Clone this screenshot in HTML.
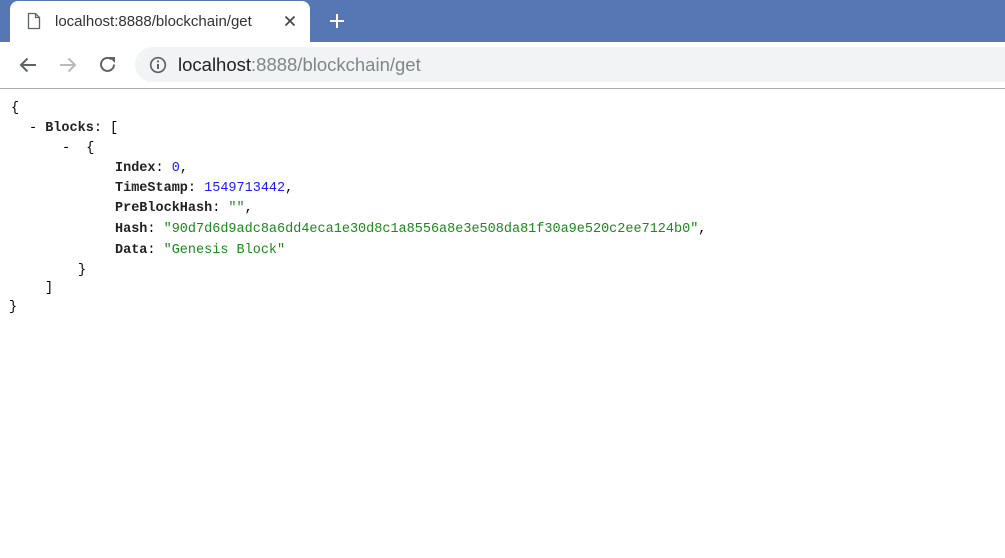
<!DOCTYPE html>
<html><head><meta charset="utf-8"><style>
body{margin:0;width:1005px;height:558px;position:relative;background:#fff;overflow:hidden;font-family:"Liberation Sans",sans-serif}
.a{position:absolute}
.j{position:absolute;font-family:"Liberation Mono","DejaVu Sans Mono",monospace;font-size:13.5px;line-height:16px;color:#000;white-space:pre}
.k{font-weight:bold;color:#222}
.n{color:#1a1aff}
.s{color:#1a8a1a}
</style></head><body>
<div class="a" style="left:0;top:0;width:1005px;height:42px;background:#5677b4"></div>
<div class="a" style="left:10px;top:1px;width:300px;height:41px;background:#fff;border-radius:8px 8px 0 0"></div>
<svg class="a" style="left:26px;top:12px" width="16" height="18" viewBox="0 0 16 18"><path d="M2.5 1.5h7l4 4v11h-11z M9.5 1.5v4h4" fill="none" stroke="#5f6368" stroke-width="1.3"/></svg>
<div class="a" style="left:55px;top:13px;font-size:15px;color:#333">localhost:8888/blockchain/get</div>
<svg class="a" style="left:284px;top:15px" width="12" height="12"><path d="M1.5 1.5l9 9M10.5 1.5l-9 9" stroke="#444" stroke-width="1.7"/></svg>
<svg class="a" style="left:329px;top:13px" width="16" height="16"><path d="M8 1v14M1 8h14" stroke="#fff" stroke-width="2"/></svg>
<svg class="a" style="left:18px;top:56px" width="20" height="18"><path d="M18 9H3M9.5 2.5L3 9l6.5 6.5" fill="none" stroke="#5f6368" stroke-width="2"/></svg>
<svg class="a" style="left:58px;top:56px" width="20" height="18"><path d="M2 9h15M10.5 2.5L17 9l-6.5 6.5" fill="none" stroke="#b8babd" stroke-width="2"/></svg>
<svg class="a" style="left:98px;top:55px" width="20" height="20"><path d="M16 9.5A6.5 6.5 0 1 1 13.5 4.3" fill="none" stroke="#5f6368" stroke-width="2"/><path d="M11 2h6v6z" fill="#5f6368"/></svg>
<div class="a" style="left:135px;top:47px;width:890px;height:35px;background:#f1f3f4;border-radius:18px"></div>
<svg class="a" style="left:149px;top:56px" width="18" height="18"><circle cx="9" cy="9" r="7.3" fill="none" stroke="#5f6368" stroke-width="1.7"/><path d="M9 8v5" stroke="#5f6368" stroke-width="2"/><circle cx="9" cy="5.4" r="1.1" fill="#5f6368"/></svg>
<div class="a" style="left:178px;top:54px;font-size:18.5px;color:#202124">localhost<span style="color:#80868b">:8888/blockchain/get</span></div>
<div class="a" style="left:0;top:88px;width:1005px;height:1px;background:#aaa"></div>
<div class="j" style="left:11px;top:101px">{</div>
<div class="j" style="left:29px;top:121px">- <span class="k">Blocks</span>: [</div>
<div class="j" style="left:62px;top:141px">-  {</div>
<div class="j" style="left:115px;top:161px"><span class="k">Index</span>: <span class="n">0</span>,</div>
<div class="j" style="left:115px;top:181px"><span class="k">TimeStamp</span>: <span class="n">1549713442</span>,</div>
<div class="j" style="left:115px;top:201px"><span class="k">PreBlockHash</span>: <span class="s">""</span>,</div>
<div class="j" style="left:115px;top:222px"><span class="k">Hash</span>: <span class="s">"90d7d6d9adc8a6dd4eca1e30d8c1a8556a8e3e508da81f30a9e520c2ee7124b0"</span>,</div>
<div class="j" style="left:115px;top:243px"><span class="k">Data</span>: <span class="s">"Genesis Block"</span></div>
<div class="j" style="left:78px;top:263px">}</div>
<div class="j" style="left:45px;top:281px">]</div>
<div class="j" style="left:9px;top:300px">}</div>
</body></html>
